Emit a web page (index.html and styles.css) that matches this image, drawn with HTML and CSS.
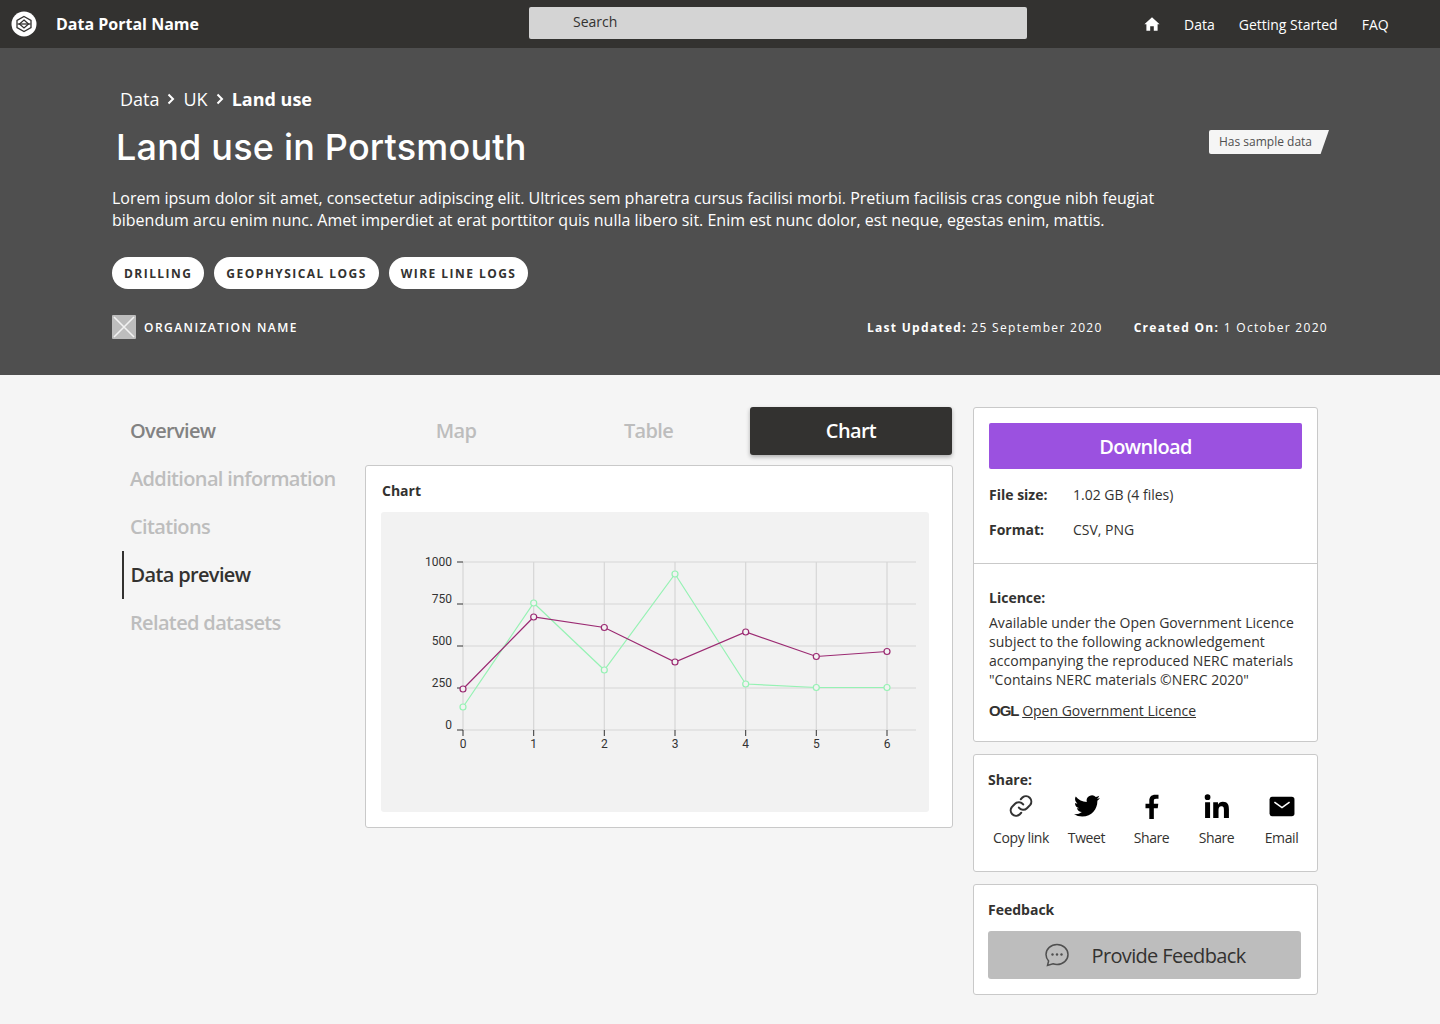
FILE: index.html
```html
<!DOCTYPE html>
<html lang="en">
<head>
  <meta charset="UTF-8" />
  <meta name="viewport" content="width=device-width, initial-scale=1.0" />
  <title>Land use in Portsmouth</title>
  <link rel="stylesheet" href="styles.css">
</head>
<body>
  <header class="topbar">
    <div class="brand">
      <svg class="brand-logo" viewBox="0 0 26 26" width="26" height="26">
        <circle cx="13" cy="13" r="12.5" fill="#fff"/>
        <g fill="none" stroke="#333230" stroke-width="1.3">
          <path d="M13 5.5 L20 9.5 V16.5 L13 20.5 L6 16.5 V9.5 Z"/>
          <path d="M13 9 L17.5 13 L13 17 L8.5 13 Z"/>
          <path d="M6.5 13 H19.5"/>
        </g>
      </svg>
      <span class="brand-name">Data Portal Name</span>
    </div>
    <div class="search">Search</div>
    <nav class="topnav">
      <svg viewBox="0 0 16 14" width="16" height="14"><path fill="#fff" d="M8 0.3 L15.6 7.2 H13.6 V13.7 H9.8 V9.2 H6.2 V13.7 H2.4 V7.2 H0.4 Z"/></svg>
      <a>Data</a>
      <a>Getting Started</a>
      <a>FAQ</a>
    </nav>
  </header>

  <section class="hero">
    <div class="crumbs">
      <span>Data</span>
      <svg viewBox="0 0 8 12" width="8" height="12"><path d="M1.5 1.5 L6 6 L1.5 10.5" fill="none" stroke="#fff" stroke-width="2"/></svg>
      <span>UK</span>
      <svg viewBox="0 0 8 12" width="8" height="12"><path d="M1.5 1.5 L6 6 L1.5 10.5" fill="none" stroke="#fff" stroke-width="2"/></svg>
      <strong>Land use</strong>
    </div>
    <div class="title-row">
      <h1>Land use in Portsmouth</h1>
      <div class="sample-tag">Has sample data</div>
    </div>
    <p class="intro">Lorem ipsum dolor sit amet, consectetur adipiscing elit. Ultrices sem pharetra cursus facilisi morbi. Pretium facilisis cras congue nibh feugiat bibendum arcu enim nunc. Amet imperdiet at erat porttitor quis nulla libero sit. Enim est nunc dolor, est neque, egestas enim, mattis.</p>
    <div class="tags">
      <span class="tag">DRILLING</span>
      <span class="tag">GEOPHYSICAL LOGS</span>
      <span class="tag">WIRE LINE LOGS</span>
    </div>
    <div class="meta-row">
      <div class="org">
        <svg viewBox="0 0 24 24" width="24" height="24">
          <rect width="24" height="24" rx="1" fill="#bdbdbd"/>
          <path d="M2 2 L22 22 M22 2 L2 22" stroke="#f2f2f2" stroke-width="1.6"/>
        </svg>
        <span>ORGANIZATION NAME</span>
      </div>
      <div class="dates">
        <span><b>Last Updated:</b> 25 September 2020</span>
        <span><b>Created On:</b> 1 October 2020</span>
      </div>
    </div>
  </section>

  <main class="content">
    <ul class="sidenav">
      <li class="seen">Overview</li>
      <li>Additional information</li>
      <li>Citations</li>
      <li class="active">Data preview</li>
      <li>Related datasets</li>
    </ul>

    <div class="preview">
      <div class="tabs">
        <div class="tab">Map</div>
        <div class="tab">Table</div>
        <div class="tab current">Chart</div>
      </div>
      <div class="card chart-card">
        <div class="chart-title">Chart</div>
        <div class="chart-box">
          <svg viewBox="0 0 548 300" width="548" height="300" class="chart">
            <g stroke="#d6d6d6" stroke-width="1.2" fill="none">
              <path d="M82 50 H535 M82 92 H535 M82 134 H535 M82 176 H535 M82 218 H535"/>
              <path d="M82 50 V218 M152.700 50 V218 M223.300 50 V218 M294 50 V218 M364.700 50 V218 M435.300 50 V218 M506 50 V218"/>
            </g>
            <g stroke="#333" stroke-width="1">
              <path d="M76 50 H82 M76 92 H82 M76 134 H82 M76 176 H82 M76 218 H82"/>
              <path d="M82 218 V224 M152.700 218 V224 M223.300 218 V224 M294 218 V224 M364.700 218 V224 M435.300 218 V224 M506 218 V224"/>
            </g>
            <g class="axis" text-anchor="end">
              <text x="71" y="53.500">1000</text>
              <text x="71" y="91">750</text>
              <text x="71" y="133">500</text>
              <text x="71" y="175">250</text>
              <text x="71" y="217">0</text>
            </g>
            <g class="axis" text-anchor="middle">
              <text x="82" y="236">0</text>
              <text x="152.700" y="236">1</text>
              <text x="223.300" y="236">2</text>
              <text x="294" y="236">3</text>
              <text x="364.700" y="236">4</text>
              <text x="435.300" y="236">5</text>
              <text x="506" y="236">6</text>
            </g>
            <polyline class="line-green" points="82,195 152.700,91 223.300,158 294,62 364.700,172 435.300,175.500 506,175.500"/>
            <g class="dots-green">
              <circle cx="82" cy="195" r="3"/><circle cx="152.700" cy="91" r="3"/><circle cx="223.300" cy="158" r="3"/><circle cx="294" cy="62" r="3"/><circle cx="364.700" cy="172" r="3"/><circle cx="435.300" cy="175.500" r="3"/><circle cx="506" cy="175.500" r="3"/>
            </g>
            <polyline class="line-purple" points="82,177 152.700,105 223.300,115.500 294,150 364.700,120 435.300,144.500 506,139.500"/>
            <g class="dots-purple">
              <circle cx="82" cy="177" r="3"/><circle cx="152.700" cy="105" r="3"/><circle cx="223.300" cy="115.500" r="3"/><circle cx="294" cy="150" r="3"/><circle cx="364.700" cy="120" r="3"/><circle cx="435.300" cy="144.500" r="3"/><circle cx="506" cy="139.500" r="3"/>
            </g>
          </svg>
        </div>
      </div>
    </div>

    <aside class="side">
      <div class="card info-card">
        <div class="info-top">
          <button class="download">Download</button>
          <dl class="facts">
            <dt>File size:</dt><dd>1.02 GB (4 files)</dd>
            <dt>Format:</dt><dd>CSV, PNG</dd>
          </dl>
        </div>
        <div class="licence">
          <h3>Licence:</h3>
          <p>Available under the Open Government Licence subject to the following acknowledgement accompanying the reproduced NERC materials "Contains NERC materials ©NERC 2020"</p>
          <div class="ogl"><span class="ogl-mark">OGL</span> <a>Open Government Licence</a></div>
        </div>
      </div>

      <div class="card share-card">
        <h3>Share:</h3>
        <div class="share-row">
          <div class="share-item">
            <svg viewBox="0 0 24 24" width="26" height="26" fill="none" stroke="#333" stroke-width="1.9" stroke-linecap="round"><path d="M10 13.500a5 5 0 0 0 7.500.5l3-3a5 5 0 0 0-7-7l-1.700 1.700"/><path d="M14 10.500a5 5 0 0 0-7.500-.5l-3 3a5 5 0 0 0 7 7l1.700-1.700"/></svg>
            <span>Copy link</span>
          </div>
          <div class="share-item">
            <svg viewBox="0 0 24 24" width="26" height="26"><path fill="#000" d="M23.950 4.570a10 10 0 0 1-2.820.770 4.960 4.960 0 0 0 2.160-2.720c-.950.550-2 .950-3.130 1.180a4.920 4.920 0 0 0-8.380 4.480C7.690 8.100 4.070 6.130 1.640 3.160a4.820 4.820 0 0 0-.670 2.480c0 1.710.870 3.210 2.190 4.100a4.900 4.900 0 0 1-2.230-.620v.060a4.920 4.920 0 0 0 3.950 4.830 4.900 4.900 0 0 1-2.210.080 4.940 4.940 0 0 0 4.600 3.420A9.870 9.870 0 0 1 0 19.540a14 14 0 0 0 7.560 2.210c9.050 0 14-7.500 14-13.980 0-.210 0-.420-.020-.630a9.940 9.940 0 0 0 2.410-2.570z"/></svg>
            <span>Tweet</span>
          </div>
          <div class="share-item">
            <svg viewBox="0 0 24 24" width="26" height="26"><path fill="#000" d="M9.500 25V14H6v-4h3.500V7c0-3.600 2.200-5.500 5.400-5.500 1.500 0 2.800.1 3.100.2v3.600h-2.200c-1.700 0-2.100.8-2.100 2V10h4.100l-.5 4h-3.600v11z"/></svg>
            <span>Share</span>
          </div>
          <div class="share-item">
            <svg viewBox="0 0 24 24" width="26" height="26"><path fill="#000" d="M1 8.500h4.600V23H1zM3.300 1.200a2.650 2.650 0 1 1 0 5.300 2.650 2.650 0 0 1 0-5.300zM8.500 8.500h4.400v2h.1c.6-1.200 2.100-2.400 4.400-2.400 4.700 0 5.600 3 5.600 7V23h-4.600v-7c0-1.700 0-3.800-2.300-3.800s-2.700 1.800-2.700 3.700V23H8.500z"/></svg>
            <span>Share</span>
          </div>
          <div class="share-item">
            <svg viewBox="0 0 24 24" width="26" height="26"><rect x="0.500" y="3.500" width="23" height="18" rx="2.500" fill="#000"/><path d="M5 8.500 L12 13.500 L19 8.500" fill="none" stroke="#fff" stroke-width="1.500"/></svg>
            <span>Email</span>
          </div>
        </div>
      </div>

      <div class="card feedback-card">
        <h3>Feedback</h3>
        <button class="feedback-btn">
          <svg viewBox="0 0 26 26" width="26" height="26" fill="none"><path d="M13 2.500c-6 0-11 4.400-11 10 0 2.500 1 4.700 2.600 6.400L3.500 23.500l5.500-1.700c1.200.4 2.600.7 4 .7 6 0 11-4.400 11-10s-5-10-11-10z" stroke="#4f4f4f" stroke-width="1.500"/><circle cx="8.500" cy="12.500" r="1.200" fill="#4f4f4f"/><circle cx="13" cy="12.500" r="1.200" fill="#4f4f4f"/><circle cx="17.500" cy="12.500" r="1.200" fill="#4f4f4f"/></svg>
          <span>Provide Feedback</span>
        </button>
      </div>
    </aside>
  </main>
</body>
</html>
```

FILE: styles.css
```css
* {
  box-sizing: border-box;
}

body {
  margin: 0;
  min-height: 1024px;
  background: #f5f5f5;
  color: #333230;
  font-family: "Open Sans", Arial, sans-serif;
}

h1, h3, p, ul, dl, dd {
  margin: 0;
  padding: 0;
}

/* top bar */
.topbar {
  height: 48px;
  background: #333230;
  display: grid;
  grid-template-columns: 529px 498px 1fr;
  align-items: center;
  color: #fff;
}

.brand {
  display: flex;
  align-items: center;
  padding-left: 11px;
}

.brand-name {
  margin-left: 19px;
  font-size: 16px;
  font-weight: 700;
}

.search {
  height: 32px;
  margin-top: -2px;
  padding: 5px 0 0 44px;
  background: #d4d4d4;
  border-radius: 2px;
  color: #333230;
  font-size: 14px;
}

.topnav {
  display: flex;
  align-items: center;
  gap: 24px;
  padding-left: 117px;
  font-size: 14px;
}

/* hero */
.hero {
  height: 327px;
  padding: 38px 112px 0;
  background: #4f4f4f;
  color: #fff;
}

.crumbs {
  display: flex;
  align-items: center;
  gap: 8px;
  padding-left: 8px;
  height: 26px;
  font-size: 18px;
}

.crumbs strong {
  font-weight: 700;
}

.title-row {
  display: flex;
  justify-content: space-between;
  align-items: flex-start;
  height: 54px;
  margin-top: 8px;
}

h1 {
  padding-left: 4px;
  font-family: Inter, "Open Sans", sans-serif;
  font-size: 36px;
  line-height: 54px;
  font-weight: 500;
  letter-spacing: 0.2px;
}

.sample-tag {
  width: 120px;
  height: 24px;
  margin: 10px -1px 0 0;
  padding: 3px 0 0 10px;
  background: #f5f5f5;
  border-radius: 2px 0 0 2px;
  clip-path: polygon(0 0, 100% 0, 93% 100%, 0 100%);
  color: #4f4f4f;
  font-size: 12px;
}

.intro {
  width: 1060px;
  margin-top: 13px;
  font-size: 16px;
  line-height: 22px;
}

.tags {
  display: flex;
  gap: 10px;
  margin-top: 26px;
}

.tag {
  height: 32px;
  padding: 0 12px;
  background: #fff;
  border-radius: 16px;
  color: #333230;
  font-size: 12px;
  font-weight: 700;
  line-height: 33px;
  letter-spacing: 1.45px;
}

.meta-row {
  display: flex;
  justify-content: space-between;
  align-items: center;
  margin-top: 26px;
  font-size: 12px;
  letter-spacing: 1.45px;
}

.org {
  display: flex;
  align-items: center;
  gap: 8px;
  font-weight: 600;
}

.dates {
  display: flex;
  gap: 31px;
  letter-spacing: 1.3px;
}

.dates b {
  font-weight: 700;
}

/* main columns */
.content {
  display: flex;
  align-items: flex-start;
  padding: 32px 122px 0;
}

.sidenav {
  width: 243px;
  list-style: none;
}

.sidenav li {
  height: 48px;
  padding-left: 8px;
  color: #bdbdbd;
  font-size: 20px;
  font-weight: 600;
  line-height: 48px;
  letter-spacing: -0.65px;
}

.sidenav .seen {
  color: #828282;
}

.sidenav .active {
  border-left: 2px solid #333230;
  padding-left: 6.500px;
  color: #333230;
}

.preview {
  width: 588px;
}

.tabs {
  display: grid;
  grid-template-columns: 182px 203px 203px;
  height: 48px;
}

.tab {
  color: #bdbdbd;
  font-size: 20px;
  font-weight: 600;
  line-height: 48px;
  text-align: center;
  letter-spacing: -0.65px;
}

.tab.current {
  margin-right: 1px;
  background: #333230;
  border-radius: 3px;
  box-shadow: 0 2px 4px rgba(0, 0, 0, 0.3);
  color: #fff;
}

.card {
  background: #fff;
  border: 1px solid #c9c9c9;
  border-radius: 3px;
}

.chart-card {
  height: 363px;
  margin-top: 10px;
  padding: 15px 23px 0 15px;
}

.chart-title {
  padding-left: 1px;
  font-size: 14px;
  font-weight: 700;
  line-height: 20px;
}

.chart-box {
  height: 300px;
  margin-top: 11px;
  background: #f2f2f2;
  border-radius: 3px;
}

.chart {
  display: block;
}

.axis {
  fill: #333;
  font-family: Roboto, sans-serif;
  font-size: 12px;
}

.line-green, .line-purple {
  fill: none;
}

.line-green {
  stroke: #96f2b4;
  stroke-width: 1.2;
}

.line-purple {
  stroke: #9b2a72;
  stroke-width: 1.2;
}

.dots-green circle {
  fill: #f2f2f2;
  stroke: #96f2b4;
  stroke-width: 1.2;
}

.dots-purple circle {
  fill: #f2f2f2;
  stroke: #9b2a72;
  stroke-width: 1.2;
}

/* right column */
.side {
  width: 345px;
  margin-left: 20px;
  display: flex;
  flex-direction: column;
  gap: 12px;
}

.side h3 {
  font-size: 14px;
  font-weight: 700;
  line-height: 20px;
}

.info-card {
  height: 335px;
}

.info-top {
  height: 156px;
  padding: 15px 15px 0;
  border-bottom: 1px solid #c9c9c9;
}

.download {
  display: block;
  width: 313px;
  height: 46px;
  border: none;
  border-radius: 2px;
  background: #9b51e0;
  color: #fff;
  font-family: inherit;
  font-size: 20px;
  font-weight: 600;
  letter-spacing: -0.65px;
}

.facts {
  display: grid;
  grid-template-columns: 84px 1fr;
  row-gap: 15px;
  margin-top: 16px;
  font-size: 14px;
  line-height: 20px;
}

.facts dt {
  font-weight: 700;
}

.licence {
  padding: 24px 15px 0;
  font-size: 14px;
  line-height: 19px;
}

.licence p {
  margin-top: 5px;
  letter-spacing: 0.02px;
}

.ogl {
  margin-top: 12px;
  line-height: 20px;
}

.ogl-mark {
  font-family: "Liberation Sans", Arial, sans-serif;
  font-size: 15px;
  font-weight: 700;
  letter-spacing: -1px;
}

.ogl a {
  text-decoration: underline;
}

.share-card {
  height: 118px;
  padding: 15px 14px 0;
}

.share-row {
  display: grid;
  grid-template-columns: 66px 65px 65px 65px 65px;
  margin-top: 3px;
}

.share-item {
  display: flex;
  flex-direction: column;
  align-items: center;
  font-size: 14px;
  letter-spacing: -0.4px;
}

.share-item span {
  margin-top: 9px;
  line-height: 20px;
}

.feedback-card {
  height: 111px;
  padding: 15px 14px 0;
}

.feedback-btn {
  display: flex;
  justify-content: center;
  align-items: center;
  gap: 22px;
  width: 313px;
  height: 48px;
  margin-top: 11px;
  border: none;
  border-radius: 3px;
  background: #bdbdbd;
  color: #333230;
  font-family: inherit;
  font-size: 20px;
  letter-spacing: -0.65px;
}
```
